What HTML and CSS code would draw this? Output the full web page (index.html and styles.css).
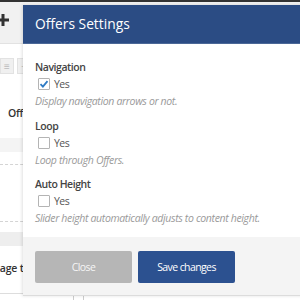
FILE: index.html
```html
<!DOCTYPE html>
<html lang="en">
<head>
    <meta charset="UTF-8">
    <title>Offers Settings</title>
    <link rel="stylesheet" href="styles.css">
</head>
<body>
    <div class="topbar"></div>
    <div class="page">
        <div class="page-head">
            <svg class="plus" width="12" height="12" viewBox="0 0 12 12"><path d="M0 6h12M6 0v12" stroke="#333" stroke-width="3"/></svg>
        </div>
        <div class="tools">
            <span class="tool">&#8801;</span>
            <span class="tool">&minus;</span>
        </div>
        <div class="bg-title">Offers list</div>
        <div class="band"></div>
        <div class="dash first"></div>
        <div class="dash"></div>
        <div class="band second"></div>
        <div class="bg-label">Image title</div>
        <div class="bottom-line"><span class="tiny-box"></span></div>
    </div>

    <div class="modal">
        <div class="modal-header">Offers Settings</div>
        <div class="modal-body">
            <div class="setting">
                <div class="setting-label">Navigation</div>
                <label class="check"><span class="box checked"><svg width="10" height="10" viewBox="0 0 10 10"><path d="M1.5 5.2l2.4 2.4 4.6-5.4" fill="none" stroke="#2f7bc4" stroke-width="1.8"/></svg></span>Yes</label>
                <div class="setting-desc">Display navigation arrows or not.</div>
            </div>
            <div class="setting">
                <div class="setting-label">Loop</div>
                <label class="check"><span class="box"></span>Yes</label>
                <div class="setting-desc">Loop through Offers.</div>
            </div>
            <div class="setting">
                <div class="setting-label">Auto Height</div>
                <label class="check"><span class="box"></span>Yes</label>
                <div class="setting-desc">Slider height automatically adjusts to content height.</div>
            </div>
        </div>
        <div class="modal-footer">
            <button class="btn btn-close">Close</button>
            <button class="btn btn-save">Save changes</button>
        </div>
    </div>
</body>
</html>
```

FILE: styles.css
```css
body {
    margin: 0;
    width: 300px;
    height: 300px;
    overflow: hidden;
    position: relative;
    background: #fff;
    font-family: "Open Sans", "Noto Sans", sans-serif;
}
.topbar {
    height: 2px;
    background: #333;
}
.page-head {
    height: 41px;
    background: #f1f1f1;
    border-bottom: 1px solid #e2e2e2;
}
.plus {
    margin: 12px 0 0 -3px;
}
.tools {
    display: flex;
    gap: 3px;
    margin-top: 14px;
    height: 14px;
}
.tool {
    width: 12px;
    height: 14px;
    background: #f0f0f0;
    border: 1px solid #e2e2e2;
    color: #bbb;
    font-size: 10px;
    line-height: 14px;
    text-align: center;
}
.bg-title {
    margin: 34px 0 0 8px;
    font-size: 10.5px;
    font-weight: 600;
    letter-spacing: -0.3px;
    color: #333;
}
.band {
    height: 14px;
    margin-top: 18px;
    background: #f4f4f4;
}
.dash {
    margin-top: 12px;
    border-top: 1px dashed #d4d4d4;
}
.dash + .dash {
    margin-top: 56px;
}
.band.second {
    margin-top: 10px;
    background: #eeeeee;
}
.bg-label {
    margin-top: 15px;
    margin-left: -13px;
    font-size: 10.5px;
    font-weight: 600;
    letter-spacing: -0.2px;
    color: #333;
}
.bottom-line {
    position: relative;
    margin-top: 18px;
    border-top: 1px solid #ddd;
}
.tiny-box {
    position: absolute;
    left: 73px;
    top: 0;
    width: 9px;
    height: 6px;
    border: 1px solid #ccc;
}

.modal {
    position: absolute;
    left: 23px;
    top: 5px;
    width: 300px;
    background: #fff;
    box-shadow: -1px 0 3px rgba(0, 0, 0, 0.12);
}
.modal-header {
    height: 38px;
    padding-left: 12px;
    background: #2b4c84;
    border-bottom: 1px solid #4b6897;
    color: #fff;
    font-size: 13.8px;
    line-height: 38px;
}
.modal-body {
    height: 178px;
    padding: 15px 12px 0;
}
.setting {
    margin-bottom: 8.5px;
}
.setting-label {
    font-size: 10.5px;
    font-weight: 600;
    letter-spacing: -0.45px;
    line-height: 16px;
    color: #444;
}
.check {
    display: flex;
    align-items: center;
    height: 18px;
    padding-left: 3px;
    font-size: 10.5px;
    letter-spacing: -0.5px;
    color: #555;
}
.box {
    display: flex;
    align-items: center;
    justify-content: center;
    box-sizing: border-box;
    width: 12px;
    height: 12px;
    margin-right: 4px;
    border: 1px solid #b4b4b4;
    border-radius: 1px;
    background: #fff;
}
.setting-desc {
    font-size: 10.5px;
    font-style: italic;
    letter-spacing: -0.35px;
    line-height: 16px;
    color: #9a9a9a;
}
.modal-footer {
    display: flex;
    gap: 6px;
    height: 44px;
    padding: 14px 12px 0;
    background: #f4f4f4;
    border-bottom: 1px solid #dcdcdc;
}
.btn {
    width: 97px;
    height: 32px;
    border: none;
    border-radius: 2px;
    font-family: inherit;
    font-size: 10.5px;
    letter-spacing: -0.6px;
}
.btn-close {
    background: #b6b6b6;
    color: #f5f5f5;
}
.btn-save {
    background: #2c5190;
    color: #fff;
}
```
